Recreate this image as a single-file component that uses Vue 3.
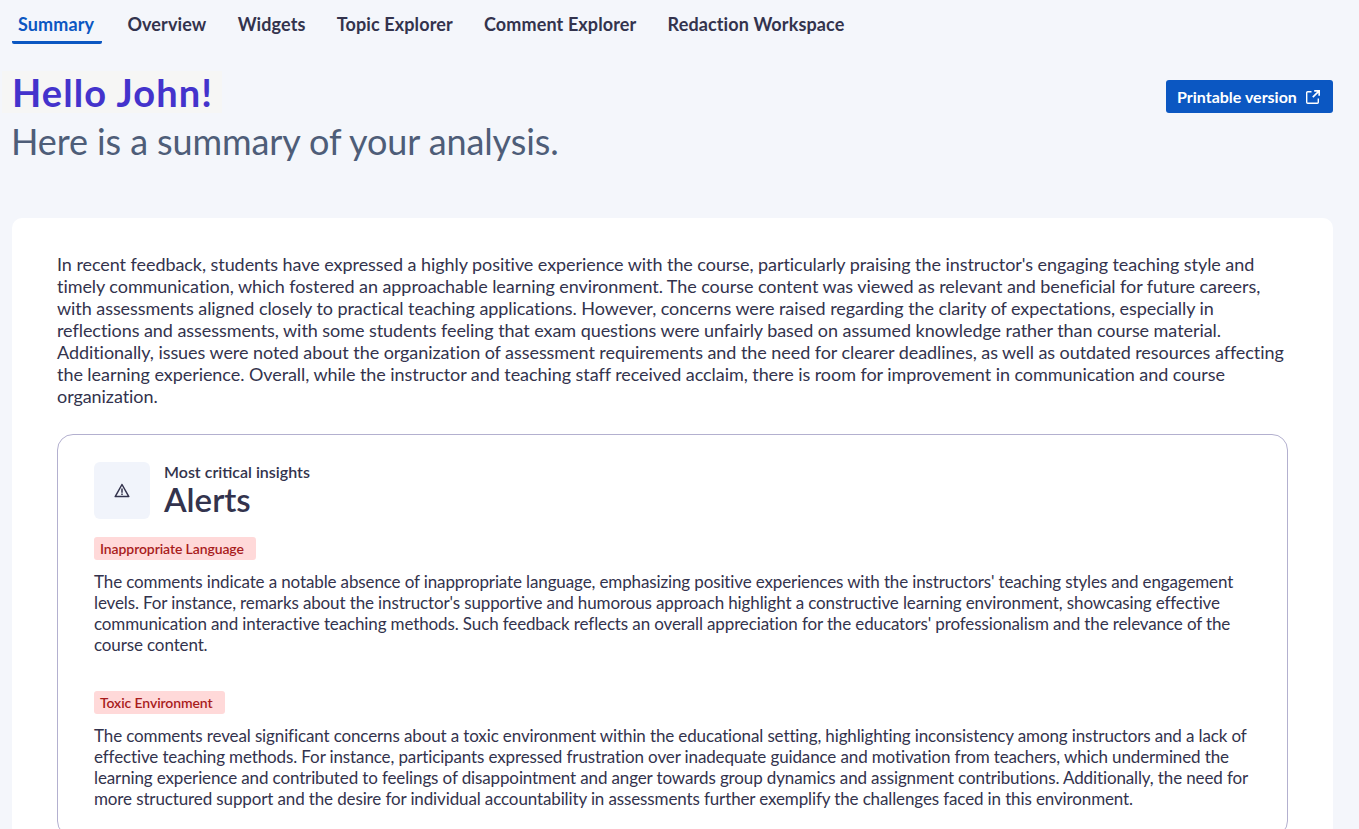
<template>
  <div class="page">
    <nav class="tabs">
      <a
        v-for="tab in tabs"
        :key="tab"
        class="tab"
        :class="{ active: tab === 'Summary' }"
      >{{ tab }}</a>
    </nav>

    <header class="head">
      <div>
        <h1 class="hello">Hello John!</h1>
        <h2 class="sub">Here is a summary of your analysis.</h2>
      </div>
      <button class="print">
        Printable version
        <svg width="14" height="14" viewBox="0 0 14 14" fill="none" stroke="#fff" stroke-width="1.4">
          <path d="M5.5 1.7H1.7A1 1 0 0 0 .7 2.7v9.6a1 1 0 0 0 1 1h9.6a1 1 0 0 0 1-1V8.5" />
          <path d="M8.2 .8h5v5M13.2 .8L6.8 7.2" stroke-width="1.7" />
        </svg>
      </button>
    </header>

    <main class="card">
      <p class="summary">{{ summary }}</p>

      <section class="alerts">
        <div class="alerts-head">
          <div class="icon-box">
            <svg width="16" height="15" viewBox="0 0 16 15" fill="none" stroke="#33334d" stroke-width="1.5" stroke-linejoin="round">
              <path d="M8 1.5L1.2 13.6h13.6z" />
              <path d="M8 5.6v4.2M8 10.6v1.5" />
            </svg>
          </div>
          <div>
            <div class="eyebrow">Most critical insights</div>
            <div class="alerts-title">Alerts</div>
          </div>
        </div>

        <div v-for="a in alerts" :key="a.label" class="alert">
          <span class="tag">{{ a.label }}</span>
          <p class="alert-text">{{ a.text }}</p>
        </div>
      </section>
    </main>
  </div>
</template>

<script setup>
const tabs = ['Summary', 'Overview', 'Widgets', 'Topic Explorer', 'Comment Explorer', 'Redaction Workspace'];

const summary = "In recent feedback, students have expressed a highly positive experience with the course, particularly praising the instructor's engaging teaching style and timely communication, which fostered an approachable learning environment. The course content was viewed as relevant and beneficial for future careers, with assessments aligned closely to practical teaching applications. However, concerns were raised regarding the clarity of expectations, especially in reflections and assessments, with some students feeling that exam questions were unfairly based on assumed knowledge rather than course material. Additionally, issues were noted about the organization of assessment requirements and the need for clearer deadlines, as well as outdated resources affecting the learning experience. Overall, while the instructor and teaching staff received acclaim, there is room for improvement in communication and course organization.";

const alerts = [
  {
    label: 'Inappropriate Language',
    text: "The comments indicate a notable absence of inappropriate language, emphasizing positive experiences with the instructors' teaching styles and engagement levels. For instance, remarks about the instructor's supportive and humorous approach highlight a constructive learning environment, showcasing effective communication and interactive teaching methods. Such feedback reflects an overall appreciation for the educators' professionalism and the relevance of the course content.",
  },
  {
    label: 'Toxic Environment',
    text: 'The comments reveal significant concerns about a toxic environment within the educational setting, highlighting inconsistency among instructors and a lack of effective teaching methods. For instance, participants expressed frustration over inadequate guidance and motivation from teachers, which undermined the learning experience and contributed to feelings of disappointment and anger towards group dynamics and assignment contributions. Additionally, the need for more structured support and the desire for individual accountability in assessments further exemplify the challenges faced in this environment.',
  },
];
</script>

<style>
html,
body {
  margin: 0;
  background: #f4f6fb;
  overflow: hidden;
}
</style>

<style scoped>
.page {
  height: 829px;
  overflow: hidden;
  box-sizing: border-box;
  padding: 0 26px 0 12px;
  font-family: Lato, sans-serif;
  color: #33334d;
}

.tabs {
  display: flex;
  gap: 19.2px;
  height: 44px;
}

.tab {
  height: 44px;
  padding: 3px 6px 0;
  box-sizing: border-box;
  line-height: 43px;
  font-size: 18px;
  font-weight: 700;
  letter-spacing: 0.12px;
  border-bottom: 3px solid transparent;
  border-radius: 2px;
  white-space: nowrap;
}

.tab.active {
  color: #0b57c2;
  border-bottom-color: #0b57c2;
  padding-right: 8px;
}

.head {
  display: flex;
  justify-content: space-between;
  align-items: flex-start;
  height: 174px;
}

.hello {
  display: inline-block;
  margin: 27px 0 0 -10px;
  padding: 0 9px 0 10px;
  height: 42px;
  line-height: 42px;
  font-size: 38px;
  font-weight: 700;
  letter-spacing: 1.1px;
  color: #4433cc;
  background: #f6f6f5;
}

.sub {
  margin: 6px 0 0 -1px;
  font-size: 36px;
  line-height: 44px;
  font-weight: 400;
  letter-spacing: -0.1px;
  color: #4e5d78;
}

.print {
  display: flex;
  align-items: center;
  gap: 9px;
  margin-top: 36px;
  width: 167px;
  height: 33px;
  padding: 0 0 0 11px;
  border: none;
  border-radius: 3px;
  background: #0b57c2;
  color: #fff;
  font-family: inherit;
  font-size: 16px;
  font-weight: 700;
}

.card {
  background: #fff;
  border-radius: 10px;
  padding: 35px 45px 0;
}

.summary {
  margin: 0;
  font-size: 18px;
  letter-spacing: -0.06px;
  line-height: 22px;
}

.alerts {
  margin-top: 27px;
  padding: 27px 36px;
  border: 1px solid #b3b0cf;
  border-radius: 16px;
}

.alerts-head {
  display: flex;
  gap: 14px;
  align-items: center;
}

.icon-box {
  display: flex;
  align-items: center;
  justify-content: center;
  width: 56px;
  height: 57px;
  border-radius: 6px;
  background: #f1f4fb;
}

.eyebrow {
  font-size: 16px;
  font-weight: 600;
  line-height: 20px;
  margin-top: -3px;
}

.alerts-title {
  font-size: 33px;
  font-weight: 600;
  line-height: 36px;
  margin-top: -1px;
}

.alert {
  margin-top: 18px;
}

.alert + .alert {
  margin-top: 36px;
}

.tag {
  display: inline-block;
  height: 23px;
  padding: 0 12px 0 6px;
  line-height: 23px;
  font-size: 14px;
  font-weight: 600;
  letter-spacing: -0.1px;
  border-radius: 3px;
  color: #a81c1c;
  background: #ffd9d9;
}

.alert-text {
  margin: 11px 0 0;
  font-size: 17px;
  letter-spacing: -0.125px;
  line-height: 21px;
}
</style>
